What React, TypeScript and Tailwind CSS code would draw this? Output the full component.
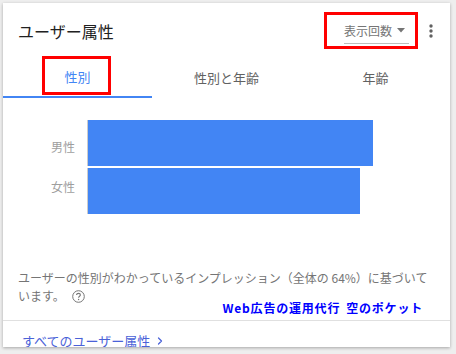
import { ChevronRight } from "lucide-react";

// Demographics card — gender split with tabs and a horizontal bar chart

const jp = { fontFamily: '"Noto Sans CJK JP", "Noto Sans", sans-serif' };

const tabs = ["性別", "性別と年齢", "年齢"];

const bars = [
  { label: "男性", width: 285, shift: "translate-y-[4px]" },
  { label: "女性", width: 272, shift: "-translate-y-[4px]" },
];

export default function App() {
  return (
    <div className="w-[456px] h-[354px] bg-[#eeeeee] pl-[3px] pt-[3px] pr-[6px] pb-[7px]" style={jp}>
      <div className="relative h-full bg-white shadow-[0_1px_3px_rgba(0,0,0,0.3)] overflow-hidden flex flex-col">
        {/* Header */}
        <div className="shrink-0 h-[55px] flex items-center pl-[15px] pr-[17px]">
          <h2 className="text-[16px] text-[#212121] leading-none">ユーザー属性</h2>
          <div className="ml-auto flex items-center">
            <div className="flex items-center gap-[5px] border-b border-[#bdbdbd] pb-[3px] pr-[4px] mt-[4px] text-[12px] text-[#757575]">
              <span>表示回数</span>
              <svg width="8" height="5" viewBox="0 0 8 5">
                <path d="M0 0 L8 0 L4 4.5 Z" fill="#757575" />
              </svg>
            </div>
            <svg width="4" height="14" viewBox="0 0 4 14" className="ml-[20px]">
              <circle cx="2" cy="2" r="1.7" fill="#616161" />
              <circle cx="2" cy="7" r="1.7" fill="#616161" />
              <circle cx="2" cy="12" r="1.7" fill="#616161" />
            </svg>
          </div>
        </div>

        {/* Tabs */}
        <div className="shrink-0 grid grid-cols-3 h-[40px] text-[13px]">
          {tabs.map((t, i) => (
            <div
              key={t}
              className={
                i === 0
                  ? "flex items-center justify-center border-b-2 border-[#4285f4] text-[#4285f4]"
                  : "flex items-center justify-center text-[#616161]"
              }
            >
              {t}
            </div>
          ))}
        </div>

        {/* Chart */}
        <div className="shrink-0 mt-[22px] flex flex-col gap-[2px]">
          {bars.map((b) => (
            <div key={b.label} className="flex items-center h-[46px]">
              <span className={"w-[84px] pr-[12px] text-right text-[12px] text-[#9e9e9e] " + b.shift}>{b.label}</span>
              <div className="h-full border-l border-[#cccccc] flex items-center">
                <div className="h-full bg-[#4285f4]" style={{ width: b.width }} />
              </div>
            </div>
          ))}
        </div>

        {/* Footnote */}
        <p className="shrink-0 mt-[55px] px-[15px] w-[440px] text-[12px] leading-[18px] text-[#757575]">
          ユーザーの性別がわかっているインプレッション（全体の 64%）に基づいています。
          <svg width="13" height="13" viewBox="0 0 13 13" className="inline-block ml-[7px] align-[-2px]">
            <circle cx="6.5" cy="6.5" r="5.8" fill="none" stroke="#757575" strokeWidth="1" />
            <path d="M4.6 5.1 C4.6 3.9 5.5 3.4 6.5 3.4 C7.5 3.4 8.4 4 8.4 5 C8.4 6.2 6.6 6.3 6.6 7.7" fill="none" stroke="#757575" strokeWidth="1.1" />
            <circle cx="6.6" cy="9.5" r="0.7" fill="#757575" />
          </svg>
        </p>
        <div className="shrink-0 flex justify-end pr-[27px] mt-[-6px] h-[18px] items-center">
          <span className="text-[12px] font-bold text-[#0000ff] tracking-[0.8px] leading-[18px]">
            Web広告の運用代行<span className="ml-[6px]">空のポケット</span>
          </span>
        </div>

        {/* Footer link */}
        <div className="shrink-0 mt-[3px] border-t border-[#e0e0e0] pl-[19px] pt-[10px]">
          <a className="flex items-center gap-[4px] text-[13px] text-[#4a62d8]">
            すべてのユーザー属性
            <ChevronRight className="w-[12px] h-[12px]" strokeWidth={2.5} />
          </a>
        </div>

        {/* Annotation boxes */}
        <div className="absolute left-[321px] top-[9px] w-[94px] h-[37px] border-[3px] border-[#ff0000]" />
        <div className="absolute left-[39px] top-[53px] w-[69px] h-[39px] border-[3px] border-[#ff0000]" />
      </div>
    </div>
  );
}
